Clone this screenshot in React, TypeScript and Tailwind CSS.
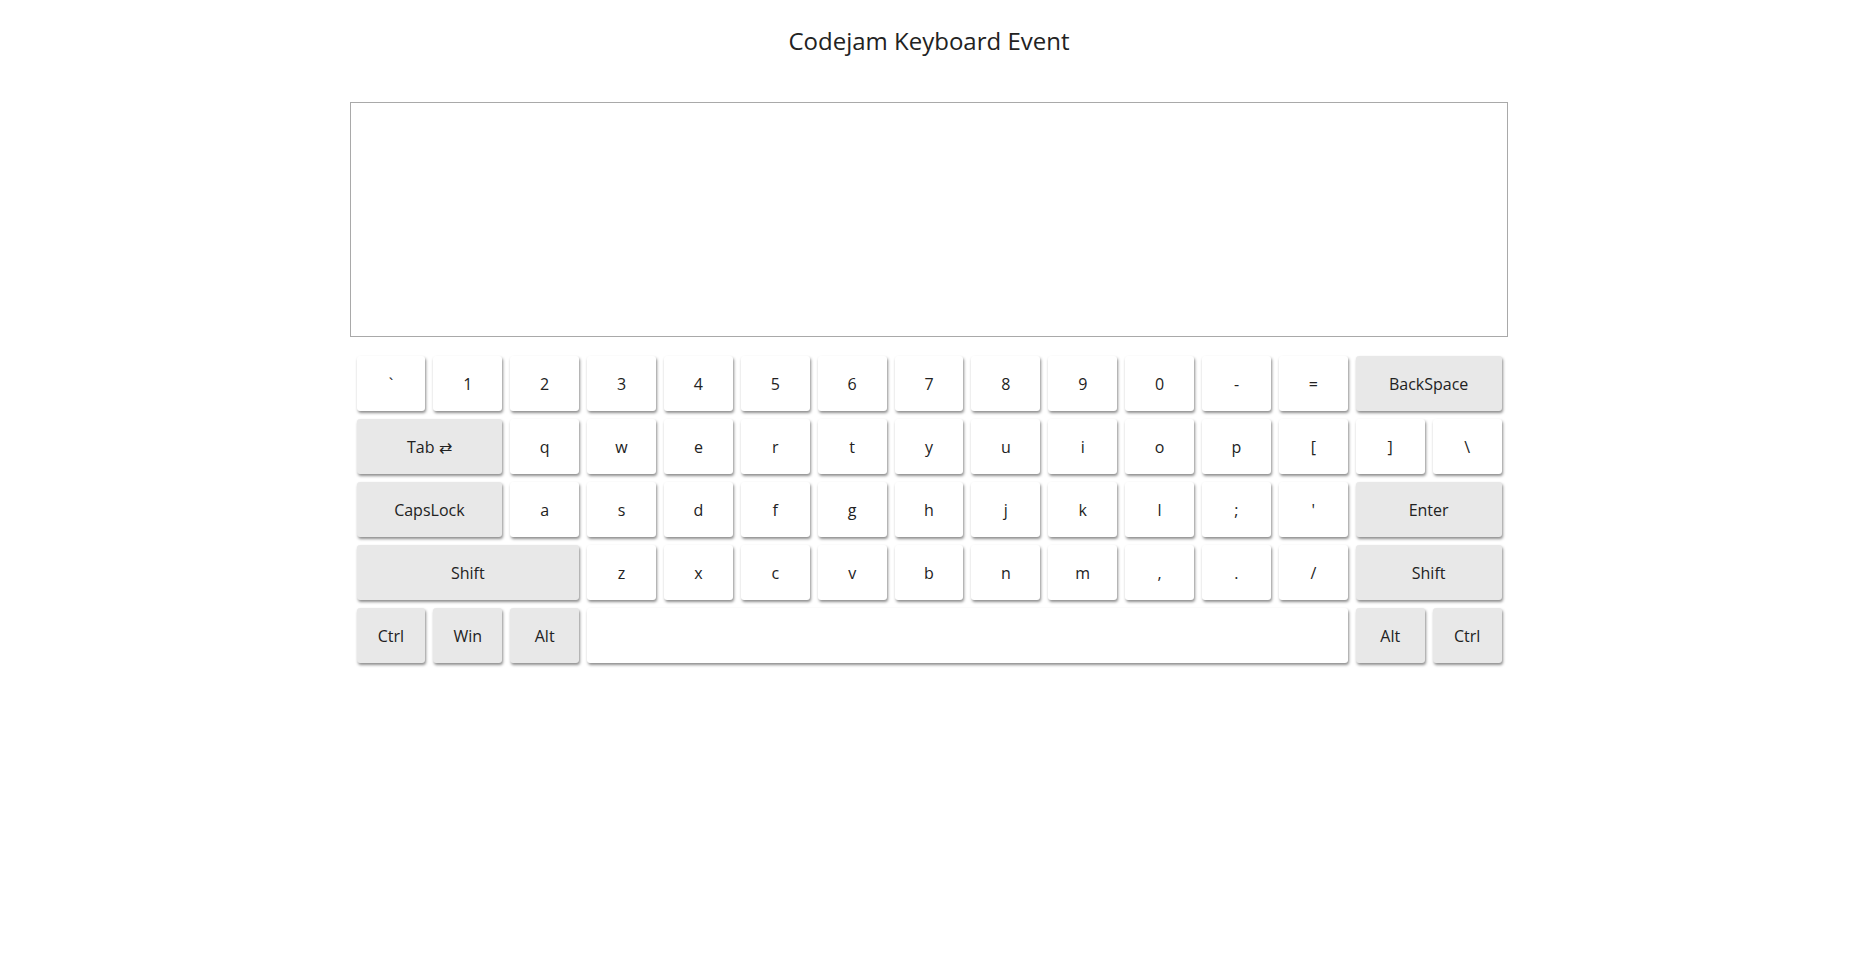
import React from 'react';

type KeyDef = {
    label: string;
    span?: number;
    special?: boolean;
};

const rows: KeyDef[][] = [
    [
        { label: '`' }, { label: '1' }, { label: '2' }, { label: '3' }, { label: '4' },
        { label: '5' }, { label: '6' }, { label: '7' }, { label: '8' }, { label: '9' },
        { label: '0' }, { label: '-' }, { label: '=' },
        { label: 'BackSpace', span: 2, special: true },
    ],
    [
        { label: 'Tab ⇄', span: 2, special: true },
        { label: 'q' }, { label: 'w' }, { label: 'e' }, { label: 'r' }, { label: 't' },
        { label: 'y' }, { label: 'u' }, { label: 'i' }, { label: 'o' }, { label: 'p' },
        { label: '[' }, { label: ']' }, { label: '\\' },
    ],
    [
        { label: 'CapsLock', span: 2, special: true },
        { label: 'a' }, { label: 's' }, { label: 'd' }, { label: 'f' }, { label: 'g' },
        { label: 'h' }, { label: 'j' }, { label: 'k' }, { label: 'l' }, { label: ';' },
        { label: "'" },
        { label: 'Enter', span: 2, special: true },
    ],
    [
        { label: 'Shift', span: 3, special: true },
        { label: 'z' }, { label: 'x' }, { label: 'c' }, { label: 'v' }, { label: 'b' },
        { label: 'n' }, { label: 'm' }, { label: ',' }, { label: '.' }, { label: '/' },
        { label: 'Shift', span: 2, special: true },
    ],
    [
        { label: 'Ctrl', special: true },
        { label: 'Win', special: true },
        { label: 'Alt', special: true },
        { label: '', span: 10 },
        { label: 'Alt', special: true },
        { label: 'Ctrl', special: true },
    ],
];

const spanClass: Record<number, string> = {
    1: 'col-span-1',
    2: 'col-span-2',
    3: 'col-span-3',
    10: 'col-span-10',
};

function Key({ keyDef }: { keyDef: KeyDef }) {
    const span = keyDef.span ?? 1;
    return (
        <button
            className={`${spanClass[span]} h-[55px] flex items-center justify-center rounded-[3px] text-[16px] text-[#222] shadow-[1px_2px_3px_rgba(0,0,0,0.45)] ${
                keyDef.special ? 'bg-[#e8e8e8]' : 'bg-white'
            }`}
        >
            {keyDef.label}
        </button>
    );
}

export default function App() {
    return (
        <div className="min-h-screen bg-white flex flex-col items-center font-['Open_Sans','Noto_Sans',sans-serif]">
            <h1 className="pt-[25px] text-[24px] leading-[32px] text-[#222]">Codejam Keyboard Event</h1>

            <textarea className="mt-[45px] w-[1158px] h-[235px] border border-[#a9a9a9] resize-none outline-none" />

            <div className="mt-[19px] w-[1145px] grid grid-cols-15 gap-x-[8px] gap-y-[8px]">
                {rows.map((row, i) =>
                    row.map((k, j) => <Key key={`${i}-${j}`} keyDef={k} />)
                )}
            </div>
        </div>
    );
}
